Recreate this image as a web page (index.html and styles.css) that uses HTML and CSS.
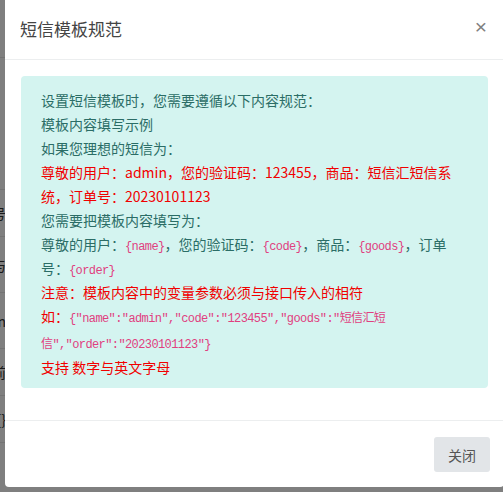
FILE: index.html
```html
<!DOCTYPE html>
<html lang="zh-CN">
<head>
<meta charset="utf-8">
<title>短信模板规范</title>
<link rel="stylesheet" href="styles.css">
</head>
<body>
<div class="page">
  <div class="row r1"></div>
  <div class="row r2"></div>
  <div class="row r3"><span class="cell">订单号</span></div>
  <div class="row r4"><span class="cell">参数与</span></div>
  <div class="row r4"><span class="cell">admin</span></div>
  <div class="row r5"><span class="cell">支持前</span></div>
  <div class="row r5"><span class="cell">{}</span></div>
  <div class="row r6"></div>
</div>
<div class="backdrop"></div>
<div class="modal">
  <div class="modal-header">
    <h5 class="modal-title">短信模板规范</h5>
    <span class="close">×</span>
  </div>
  <div class="modal-body">
    <div class="alert">
      <div class="ln">设置短信模板时，您需要遵循以下内容规范：</div>
      <div class="ln">模板内容填写示例</div>
      <div class="ln">如果您理想的短信为：</div>
      <div class="ln red">尊敬的用户：admin，您的验证码：123455，商品：短信汇短信系统，订单号：20230101123</div>
      <div class="ln">您需要把模板内容填写为：</div>
      <div class="ln">尊敬的用户：<code>{name}</code>，您的验证码：<code>{code}</code>，商品：<code>{goods}</code>，订单号：<code>{order}</code></div>
      <div class="ln red">注意：模板内容中的变量参数必须与接口传入的相符</div>
      <div class="ln red code-line">如：<code>{"name":"admin","code":"123455","goods":"短信汇短信","order":"20230101123"}</code></div>
      <div class="ln red">支持 数字与英文字母</div>
    </div>
  </div>
  <div class="modal-footer">
    <button class="btn">关闭</button>
  </div>
</div>
</body>
</html>
```
FILE: styles.css
```css
html, body {
  margin: 0;
  padding: 0;
  height: 100%;
  overflow: hidden;
}
body {
  background: #fff;
  font-family: "Noto Sans CJK SC", "Noto Sans", sans-serif;
  font-size: 14px;
  color: #333;
}
.page {
  display: flex;
  flex-direction: column;
  width: 8px;
}
.row {
  border-bottom: 1px solid #e6e6e6;
  display: flex;
  justify-content: flex-end;
  align-items: center;
  box-sizing: border-box;
  white-space: nowrap;
  font-size: 14px;
  color: #333;
}
.r1 { height: 58px; }
.r2 { height: 132px; }
.r3 { height: 47px; }
.r4 { height: 56px; }
.r5 { height: 47px; }
.r6 { height: 62px; }
.cell { padding-right: 2px; }
.backdrop {
  position: fixed;
  inset: 0;
  background: rgba(0, 0, 0, 0.5);
}
.modal {
  position: absolute;
  left: 5px;
  top: 0;
  width: 499px;
  background: #fff;
  border-radius: 0 0 4px 4px;
  display: flex;
  flex-direction: column;
}
.modal-header {
  height: 60px;
  box-sizing: border-box;
  border-bottom: 1px solid #eceeef;
  display: flex;
  align-items: center;
  justify-content: space-between;
  padding: 0 17px 2px 15px;
}
.modal-title {
  margin: 0;
  font-size: 17px;
  font-weight: 400;
  color: #444;
  line-height: 24px;
}
.close {
  font-family: "Liberation Sans", sans-serif;
  font-size: 21px;
  font-weight: 400;
  color: #808080;
  line-height: 1;
  margin-top: -4px;
}
.modal-body {
  padding: 16px;
  border-bottom: 1px solid #eceeef;
}
.alert {
  background: #d4f4f0;
  border-radius: 4px;
  padding: 12px 20px;
  margin-bottom: 16px;
  color: #2b6d66;
  line-height: 24px;
  height: 312px;
  box-sizing: border-box;
}
.red {
  color: #f10000;
}
.code-line {
  line-height: 25.5px;
}
code {
  font-family: "Liberation Mono", "Noto Sans CJK SC", monospace;
  font-size: 12px;
  line-height: 1;
  letter-spacing: -0.6px;
  color: #e0407f;
}
.modal-footer {
  display: flex;
  justify-content: flex-end;
  padding: 16px 14px 15px 16px;
}
.btn {
  width: 56px;
  height: 35px;
  border: none;
  border-radius: 3px;
  background: #e2e5e8;
  color: #555;
  font-family: "Noto Sans CJK SC", sans-serif;
  font-size: 14px;
  padding: 0;
}
```
